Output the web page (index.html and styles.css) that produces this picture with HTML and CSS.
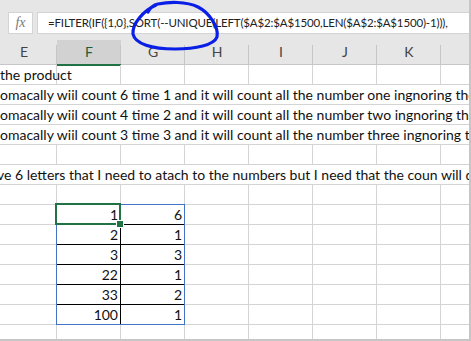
FILE: index.html
```html
<!DOCTYPE html>
<html lang="en">
<head>
    <meta charset="UTF-8">
    <title>Hoja de cálculo</title>
    <link rel="stylesheet" href="styles.css">
</head>
<body>
    <div class="sheet">

        <div class="toolbar">
            <div class="fx-box">fx</div>
            <div class="formula">=FILTER(IF({1,0},SORT(--UNIQUE(LEFT($A$2:$A$1500,LEN($A$2:$A$1500)-1))),</div>
        </div>

        <div class="col-headers">
            <div class="hcell first">E</div>
            <div class="hcell active">F</div>
            <div class="hcell">G</div>
            <div class="hcell">H</div>
            <div class="hcell">I</div>
            <div class="hcell">J</div>
            <div class="hcell">K</div>
            <div class="hcell last"></div>
        </div>

        <div class="rows">
            <div class="row">
                <div class="cell first"><span class="spill">the product</span></div>
                <div class="cell"></div><div class="cell"></div><div class="cell"></div>
                <div class="cell"></div><div class="cell"></div><div class="cell"></div><div class="cell last"></div>
            </div>
            <div class="row text">omacally wiil count 6 time 1 and it will count all the number one ingnoring the</div>
            <div class="row text">omacally wiil count 4 time 2 and it will count all the number two ingnoring the</div>
            <div class="row text">omacally wiil count 3 time 3 and it will count all the number three ingnoring the</div>
            <div class="row">
                <div class="cell first"></div>
                <div class="cell"></div><div class="cell"></div><div class="cell"></div>
                <div class="cell"></div><div class="cell"></div><div class="cell"></div><div class="cell last"></div>
            </div>
            <div class="row text cut">ve 6 letters that I need to atach to the numbers but I need that the coun will do</div>
            <div class="row">
                <div class="cell first"></div>
                <div class="cell"></div><div class="cell"></div><div class="cell"></div>
                <div class="cell"></div><div class="cell"></div><div class="cell"></div><div class="cell last"></div>
            </div>

            <div class="row">
                <div class="cell first"></div>
                <div class="cell num t">1</div><div class="cell num t">6</div><div class="cell"></div>
                <div class="cell"></div><div class="cell"></div><div class="cell"></div><div class="cell last"></div>
            </div>
            <div class="row">
                <div class="cell first"></div>
                <div class="cell num t">2</div><div class="cell num t">1</div><div class="cell"></div>
                <div class="cell"></div><div class="cell"></div><div class="cell"></div><div class="cell last"></div>
            </div>
            <div class="row">
                <div class="cell first"></div>
                <div class="cell num t">3</div><div class="cell num t">3</div><div class="cell"></div>
                <div class="cell"></div><div class="cell"></div><div class="cell"></div><div class="cell last"></div>
            </div>
            <div class="row">
                <div class="cell first"></div>
                <div class="cell num t">22</div><div class="cell num t">1</div><div class="cell"></div>
                <div class="cell"></div><div class="cell"></div><div class="cell"></div><div class="cell last"></div>
            </div>
            <div class="row">
                <div class="cell first"></div>
                <div class="cell num t">33</div><div class="cell num t">2</div><div class="cell"></div>
                <div class="cell"></div><div class="cell"></div><div class="cell"></div><div class="cell last"></div>
            </div>
            <div class="row">
                <div class="cell first"></div>
                <div class="cell num t">100</div><div class="cell num t">1</div><div class="cell"></div>
                <div class="cell"></div><div class="cell"></div><div class="cell"></div><div class="cell last"></div>
            </div>

            <div class="row">
                <div class="cell first"></div>
                <div class="cell"></div><div class="cell"></div><div class="cell"></div>
                <div class="cell"></div><div class="cell"></div><div class="cell"></div><div class="cell last"></div>
            </div>
        </div>

        <!-- borde azul de la tabla y celda activa -->
        <div class="range-border"></div>
        <div class="active-cell"><span class="fill-handle"></span></div>

        <!-- círculo dibujado a mano -->
        <svg class="scribble" width="471" height="60" viewBox="0 0 471 60">
            <path d="M156,5 C143,11 132,24 133,34 C135,44 152,49 175,49 C196,49 214,45 217,37 C219,28 210,13 198,7 C186,1 168,2 158,4 C153,5 150,8 148,12"
                  fill="none" stroke="#0a1fe6" stroke-width="3.2" stroke-linecap="round"/>
        </svg>

    </div>
</body>
</html>
```

FILE: styles.css
```css
body {
    margin: 0;
    padding: 0;
    background-color: white;
    font-family: 'Lato', 'Liberation Sans', sans-serif;
    color: #111;
}

.sheet {
    position: relative;
    width: 471px;
    height: 341px;
    overflow: hidden;
    box-sizing: border-box;
    border-right: 2px solid #c6c6c6;
    border-bottom: 2px solid #c6c6c6;
}

/* barra de fórmulas */
.toolbar {
    height: 40px;
    background-color: #e6e6e6;
    display: flex;
    align-items: flex-start;
    padding: 12px 0 0 8px;
    box-sizing: border-box;
    gap: 4px;
}

.fx-box {
    width: 25px;
    height: 22px;
    box-sizing: border-box;
    background-color: white;
    border: 1px solid #d4d4d4;
    font-family: 'Liberation Serif', serif;
    font-style: italic;
    font-size: 14px;
    color: #7a7a7a;
    line-height: 20px;
    text-align: center;
}

.formula {
    flex: 1;
    height: 22px;
    box-sizing: border-box;
    background-color: white;
    border: 1px solid #d4d4d4;
    border-right: none;
    font-size: 11.5px;
    letter-spacing: -0.15px;
    line-height: 20px;
    padding-left: 10px;
    white-space: nowrap;
    overflow: hidden;
    color: #222;
}

/* encabezados de columnas */
.col-headers {
    display: grid;
    grid-template-columns: 57px repeat(6, 64px) 1fr;
    height: 25px;
    background-color: #e6e6e6;
    box-sizing: border-box;
    border-bottom: 1px solid #c6c6c6;
}

.hcell {
    font-size: 14px;
    line-height: 24px;
    text-align: center;
    color: #444;
    background: linear-gradient(#c6c6c6, #c6c6c6) right 5px / 1px 19px no-repeat;
}

.hcell.first {
    padding-right: 9px;
}

.hcell.last {
    background: none;
}

.hcell.active {
    background-color: #d2d2d2;
    color: #1e5c37;
    border-bottom: 2px solid #217346;
    margin-bottom: -1px;
}

/* filas */
.row {
    display: grid;
    grid-template-columns: 57px repeat(6, 64px) 1fr;
    height: 20px;
    font-size: 14px;
    line-height: 19px;
}

.cell {
    border-right: 1px solid #d4d4d4;
    border-bottom: 1px solid #d4d4d4;
    padding: 0 2px;
    white-space: nowrap;
}

.cell.last {
    border-right: none;
}

.cell.first {
    overflow: visible;
}

.spill {
    position: relative;
    z-index: 1;
    margin-left: -2px;
}

.row.text {
    display: block;
    box-sizing: border-box;
    border-bottom: 1px solid #d4d4d4;
    white-space: nowrap;
    overflow: hidden;
}

.row.text.cut {
    text-indent: -3px;
}

.num {
    text-align: right;
}

.cell.t {
    border-right-color: #000;
    border-bottom-color: #000;
}

.range-border {
    position: absolute;
    left: 56px;
    top: 204px;
    width: 129px;
    height: 121px;
    box-sizing: border-box;
    border: 1px solid #4472c4;
}

.active-cell {
    position: absolute;
    left: 55px;
    top: 203px;
    width: 66px;
    height: 22px;
    box-sizing: border-box;
    border: 2px solid #217346;
}

.fill-handle {
    position: absolute;
    right: -5px;
    bottom: -5px;
    width: 6px;
    height: 6px;
    background-color: #217346;
    border: 1px solid white;
}

.scribble {
    position: absolute;
    left: 0;
    top: 0;
    pointer-events: none;
}
```
